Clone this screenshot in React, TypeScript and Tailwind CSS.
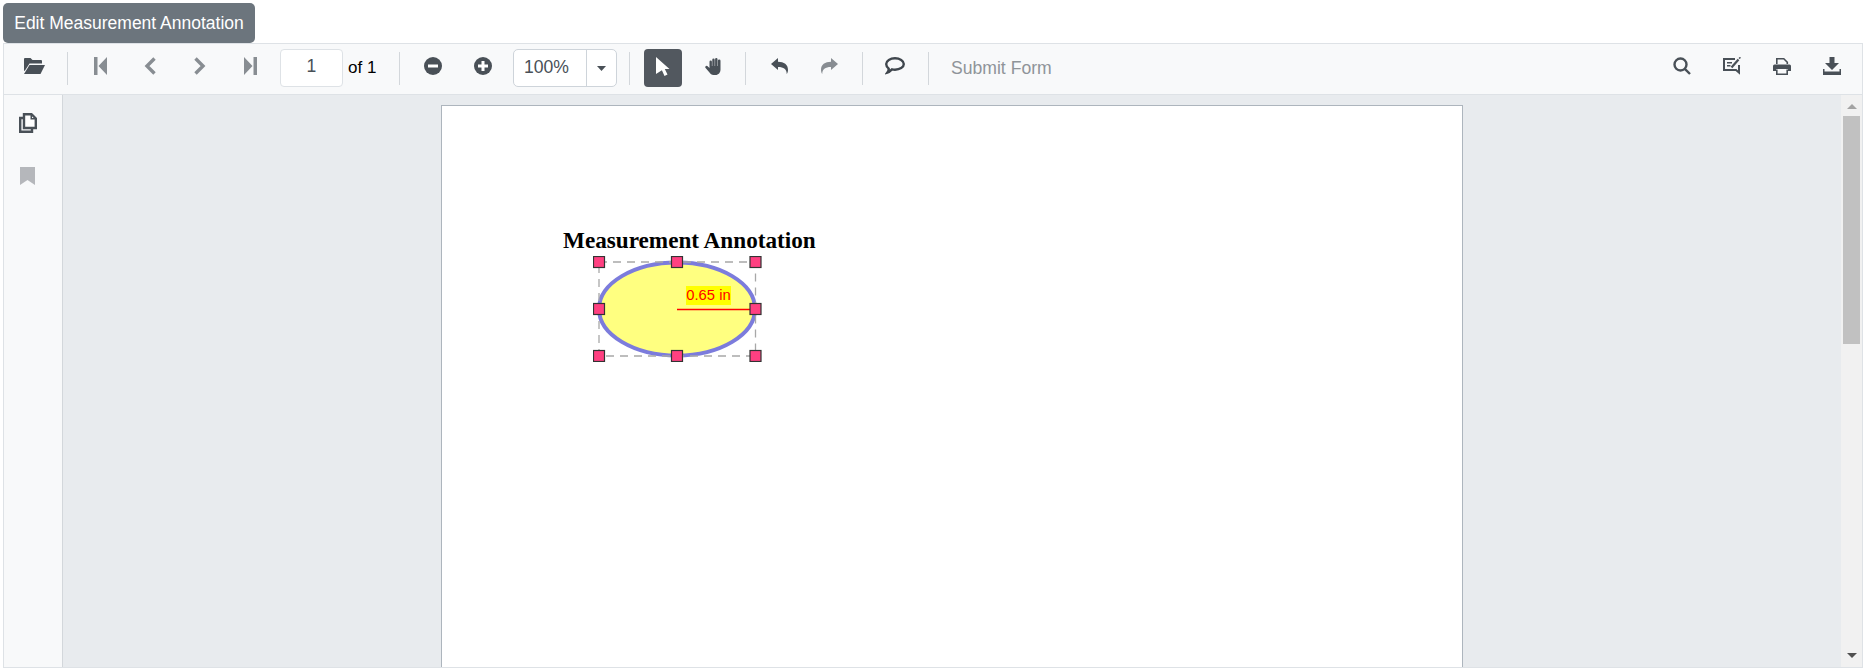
import React from "react";

const dark = "#495057";
const gray = "#888d92";

function Btn({ w = "w-[50px]", children }: { w?: string; children: React.ReactNode }) {
  return <button className={`${w} h-[38px] shrink-0 flex items-center justify-center pb-[4px]`}>{children}</button>;
}
function Sep({ ml }: { ml: string }) {
  return <div className={`${ml} w-px h-[33px] shrink-0 bg-[#d3d7db]`} />;
}

const Folder = () => (
  <svg width="21" height="16" viewBox="0 0 21 16"><path fill={dark} d="M1 0h5.500l2 2H17a1 1 0 0 1 1 1v2.500H5.500L1 12.500 0 13V1a1 1 0 0 1 1-1z" /><path fill={dark} d="M5.500 7H21l-4.500 9H0z" /></svg>
);
const First = ({ flip = false }: { flip?: boolean }) => (
  <svg width="13" height="18" viewBox="0 0 13 18" style={flip ? { transform: "scaleX(-1)" } : undefined}><path fill={gray} d="M0 0h3.500v18H0zM13 0v18L4.500 9z" /></svg>
);
const Chevron = ({ flip = false }: { flip?: boolean }) => (
  <svg width="12" height="18" viewBox="0 0 12 18" style={flip ? { transform: "scaleX(-1)" } : undefined}><path fill="none" stroke={gray} strokeWidth="3.400" d="M10.500 1.500 3 9l7.500 7.500" /></svg>
);
const ZoomCircle = ({ plus = false }: { plus?: boolean }) => (
  <svg width="18" height="18" viewBox="0 0 18 18"><circle cx="9" cy="9" r="9" fill={dark} /><rect x="4" y="7.500" width="10" height="3" fill="#fff" />{plus && <rect x="7.500" y="4" width="3" height="10" fill="#fff" />}</svg>
);
const Cursor = () => (
  <svg width="14" height="19" viewBox="0 0 14 19"><path fill="#fff" d="M0 0l13.500 12H8.800l2.700 5.400-3 1.600-2.600-5.800L0 17z" /></svg>
);
const Hand = () => (
  <svg width="18" height="17" viewBox="0 0 18 17"><path fill={dark} d="M4.500 3.800a1.200 1.200 0 0 1 2.400 0V8h.4V1.800a1.200 1.200 0 0 1 2.400 0V8h.4V1.200a1.200 1.200 0 0 1 2.400 0V8h.4V2.800a1.300 1.300 0 0 1 2.600 0v8.700c0 3-2 5.500-5 5.500H8.500c-2 0-3-1-4-2.500L.4 9.800a1.300 1.300 0 0 1 1.900-1.700l2.200 2z" /></svg>
);
const Undo = ({ color = dark, flip = false }: { color?: string; flip?: boolean }) => (
  <svg width="17" height="16" viewBox="0 0 17 16" style={flip ? { transform: "scaleX(-1)" } : undefined}><path fill={color} d="M0 6 7 0v3.800c6 0 10 2.700 10 8.200 0 1.500-.5 3-1.300 4 .2-4.600-3-7-8.700-7V12z" /></svg>
);
const Comment = () => (
  <svg width="20" height="18" viewBox="0 0 20 18"><path fill="none" stroke="#3f464d" strokeWidth="2.400" d="M10 1.300c4.800 0 8.800 2.400 8.800 5.700s-4 5.700-8.800 5.700c-1 0-2-.1-3-.4-1 1-2.500 2.700-4.600 3.300.9-1.100 1.300-2.400 1.300-3.900C2.300 10.500 1.200 8.800 1.200 7c0-3.300 4-5.700 8.800-5.700z" /></svg>
);
const Search = () => (
  <svg width="18" height="18" viewBox="0 0 18 18"><circle cx="7.500" cy="7.500" r="6" fill="none" stroke={dark} strokeWidth="2.400" /><path stroke={dark} strokeWidth="2.400" d="m11.800 11.800 5.200 5.200" /></svg>
);
const EditNote = () => (
  <svg width="18" height="18" viewBox="0 0 18 18"><path fill="none" stroke={dark} strokeWidth="2" d="M12 2H1v11h12l3 2.500V8" /><path fill={dark} d="M4 5h5v1.500H4zM4 8h3.500v1.500H4z" /><path stroke={dark} strokeWidth="2.200" d="m8.500 10.500 7-8" /><path stroke={dark} strokeWidth="1.500" d="m16 1.500 1.500-1.200" /></svg>
);
const Print = () => (
  <svg width="18" height="17" viewBox="0 0 18 17"><path fill="none" stroke={dark} strokeWidth="1.600" d="M3.800 6V.8h7l3.500 3.500V6" /><path fill={dark} d="M1.500 6.500h15A1.500 1.500 0 0 1 18 8v5h-3v-2H3v2H0V8a1.500 1.500 0 0 1 1.500-1.500z" /><path fill="none" stroke={dark} strokeWidth="1.600" d="M3.800 11.500v4.700h10.400v-4.700" /></svg>
);
const Download = () => (
  <svg width="18" height="18" viewBox="0 0 18 18"><path fill={dark} d="M6.500 0h5v6H16l-7 7-7-7h4.500z" /><path fill={dark} d="M0 12h1.500v2.500h15V12H18v6H0z" /></svg>
);
const Pages = () => (
  <svg width="18" height="20" viewBox="0 0 18 20"><path fill="#fff" stroke={dark} strokeWidth="2.400" d="M5 1.200h7.500L16.800 5.500V15H5z" /><path fill={dark} d="M11.500 1h1.500v4h4v1.500h-5.500z" /><path fill="none" stroke={dark} strokeWidth="2.400" d="M5 5H1.200v13.800H13V15" /></svg>
);
const Bookmark = () => (
  <svg width="15" height="18" viewBox="0 0 15 18"><path fill="#b5b7bb" d="M0 0h15v18l-7.500-5L0 18z" /></svg>
);

const handles: [number, number][] = [
  [6, 6], [84, 6], [162.500, 6],
  [6, 53], [162.500, 53],
  [6, 100], [84, 100], [162.500, 100],
];

const Annotation = () => (
  <div className="relative ml-[151px] mt-[2px] w-[170px] h-[106px]">
    <svg width="170" height="106" viewBox="0 0 170 106">
      <ellipse cx="84" cy="53" rx="78" ry="46.500" fill="#ffff80" stroke="#7c7cdc" strokeWidth="4" />
      <rect x="6" y="6" width="156.500" height="94" fill="none" stroke="#a8a8a8" strokeWidth="1.300" strokeDasharray="8 6" />
      <path d="M84 53.500h79" stroke="#ff0000" strokeWidth="1.600" />
      {handles.map(([x, y], i) => (
        <rect key={i} x={x - 5.500} y={y - 5.500} width="11" height="11" fill="#ff4081" stroke="#333" strokeWidth="1.200" />
      ))}
    </svg>
    <span className="absolute left-[93px] top-[30px] w-[45px] h-[19px] bg-[#ffff00] text-[#ff0000] text-[14.8px] leading-[19px] text-center whitespace-nowrap">0.65 in</span>
  </div>
);

export default function App() {
  return (
    <div className="w-[1866px] h-[670px] overflow-hidden bg-white pt-[3px] px-[3px] font-['Liberation_Sans',Arial,sans-serif]">
      <button className="block w-[252px] h-10 rounded-[5px] bg-[#6c757d] text-white text-[17.5px] text-center">Edit Measurement Annotation</button>
      <div className="w-[1860px] h-[625px] border border-[#dee2e6] flex flex-col">
        <div className="h-[51px] shrink-0 border-b border-[#dee2e6] bg-[#f8f9fa] flex items-center pl-[6px] pr-[5px] pb-[2px]">
          <Btn w="w-[49px]"><Folder /></Btn>
          <Sep ml="ml-[8px]" />
          <div className="ml-[7px]" />
          <Btn><First /></Btn>
          <Btn><Chevron /></Btn>
          <Btn><Chevron flip /></Btn>
          <Btn><First flip /></Btn>
          <div className="ml-[5px] w-[63px] h-[38px] shrink-0 rounded-[4px] border border-[#dee2e6] bg-white text-[#495057] text-[17.6px] flex items-center justify-center pb-[4px]">1</div>
          <span className="ml-[5px] w-[28px] shrink-0 text-[17px] text-black whitespace-nowrap">of 1</span>
          <Sep ml="ml-[23px]" />
          <div className="ml-[8px]" />
          <Btn><ZoomCircle /></Btn>
          <Btn><ZoomCircle plus /></Btn>
          <div className="ml-[5px] w-[104px] h-[38px] shrink-0 rounded-[5px] border border-[#ced4da] bg-white flex">
            <span className="w-[73px] border-r border-[#ced4da] text-[17.6px] text-[#495057] pl-[10px] leading-[34px]">100%</span>
            <span className="flex-1 flex items-center justify-center">
              <svg width="9" height="5" viewBox="0 0 9 5"><path fill={dark} d="M0 0h9L4.500 5z" /></svg>
            </span>
          </div>
          <Sep ml="ml-[12px]" />
          <button className="ml-[14px] w-[38px] h-[38px] shrink-0 rounded-[4px] bg-[#52585f] flex items-center justify-center pb-[3px]"><Cursor /></button>
          <div className="ml-[7px]" />
          <Btn><Hand /></Btn>
          <Sep ml="ml-[6px]" />
          <div className="ml-[8px]" />
          <Btn><Undo /></Btn>
          <Btn><Undo color={gray} flip /></Btn>
          <Sep ml="ml-[8px]" />
          <div className="ml-[7px]" />
          <Btn><Comment /></Btn>
          <Sep ml="ml-[8px]" />
          <span className="ml-[22px] text-[17.6px] text-[#8f9499] whitespace-nowrap">Submit Form</span>
          <div className="ml-auto" />
          <Btn><Search /></Btn>
          <Btn><EditNote /></Btn>
          <Btn><Print /></Btn>
          <Btn><Download /></Btn>
        </div>
        <div className="flex-1 min-h-0 flex">
          <div className="w-[59px] shrink-0 border-r border-[#d3d7db] bg-[#f8f9fa] flex flex-col items-center pr-[11px] pt-[18px] gap-[34px]">
            <Pages />
            <Bookmark />
          </div>
          <div className="flex-1 min-w-0 overflow-hidden bg-[#e8ebee] flex justify-center pt-[10px]">
            <div className="w-[1022px] h-[700px] shrink-0 bg-white border border-[#adb5bd] pt-[120px]">
              <div className="ml-[121px] font-['Liberation_Serif','Times_New_Roman',serif] font-bold text-[23.2px] leading-[28px] text-black whitespace-nowrap">Measurement Annotation</div>
              <Annotation />
            </div>
          </div>
          <div className="w-[21px] shrink-0 bg-[#f1f1f1] flex flex-col items-center">
            <div className="h-[21px] shrink-0 flex items-center justify-center pt-[2px]">
              <svg width="10" height="5" viewBox="0 0 10 5"><path fill="#a3a3a3" d="M5 0l5 5H0z" /></svg>
            </div>
            <div className="w-[17px] h-[228px] shrink-0 bg-[#c1c1c1]" />
            <div className="flex-1" />
            <div className="h-[21px] shrink-0 flex items-center justify-center pb-[2px]">
              <svg width="10" height="5" viewBox="0 0 10 5"><path fill="#505050" d="M0 0h10L5 5z" /></svg>
            </div>
          </div>
        </div>
      </div>
    </div>
  );
}
